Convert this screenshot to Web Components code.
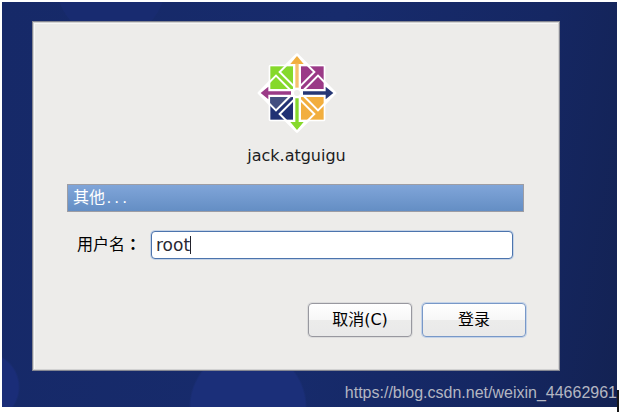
<!DOCTYPE html>
<html lang="zh-CN">
<head>
<meta charset="utf-8">
<title>登录</title>
<style>
html{height:100%;background:#fff}
body{margin:0;height:100%;font:16px/20px "DejaVu Sans","Noto Sans CJK SC",sans-serif;color:#1c1c22}
</style>
</head>
<body>
<login-screen></login-screen>
<script>
const define=(name,html)=>customElements.define(name,class extends HTMLElement{
  connectedCallback(){
    if(this.shadowRoot)return;
    const t=document.createElement('template');
    t.innerHTML=html;
    this.attachShadow({mode:'open'}).append(t.content.cloneNode(true));
  }
});

define('brand-logo',`
<style>:host{display:block;width:80px;height:80px}svg{display:block;width:100%;height:100%}</style>
<svg viewBox="-120 -120 240 240" aria-hidden="true">
 <g fill="#fff" stroke="#fff" stroke-width="10" stroke-linejoin="round">
  <path d="M-80-80H80V80H-80Z"/>
  <path d="M0-114 57-57H-57ZM0 114 57 57H-57ZM-112 0-57-57V57ZM112 0 57-57V57Z"/>
 </g>
 <path fill="#86d92b" d="M-80-80H-12V-12H-80Z"/>
 <path fill="#9b3a87" d="M12-80H80V-12H12Z"/>
 <path fill="#213174" d="M-80 12H-12V80H-80Z"/>
 <path fill="#444f80" d="M-80 12H-12L-63 52-80 35Z"/>
 <path fill="#f2ae3e" d="M12 12H80V80H12Z"/>
 <g fill="none" stroke="#fff" stroke-width="6">
  <path d="M0-115 52-63 0-11-52-63ZM0 115 52 63 0 11-52 63ZM-115 0-63-52-11 0-63 52ZM115 0 63-52 11 0 63 52Z"/>
 </g>
 <path fill="#f2ae3e" d="M0-111 20-87H-20Z"/>
 <path fill="#f6c16d" d="M-5-88H5V-16H-5Z"/>
 <path fill="#86d92b" d="M0 111 20 87H-20ZM-5 88H5V16H-5Z"/>
 <path fill="#9b3a87" d="M-109 0-86-19V19ZM-88-5H-18V5H-88Z"/>
 <path fill="#263775" d="M109 0 86-19V19ZM88-5H18V5H88Z"/>
 <circle r="15" fill="#fff"/><circle r="9" fill="#ededeb"/>
</svg>`);

define('user-row',`
<style>
:host{display:block}
button{display:block;box-sizing:border-box;width:100%;height:28px;padding:0 5px;border:1px solid #9d9da4;background:linear-gradient(#80a5d9,#648ec4);color:#fff;font:inherit;text-align:left}
</style><button type="button"><slot></slot></button>`);

define('name-field',`
<style>
:host{display:flex;align-items:center}
label{width:74px;color:#000;white-space:nowrap}
.box{flex:1;display:flex;align-items:center;box-sizing:border-box;height:28px;padding:0 4px;border:1px solid #4c74ad;border-radius:4px;background:#fff;box-shadow:0 0 0 1px #c6d3e5}
input{field-sizing:content;border:0;padding:0;margin:0;outline:0;background:none;font:inherit;font-size:17px;color:#292933}
i{width:1px;height:18px;background:#22222c}
</style>
<label for="user"><slot></slot></label>
<div class="box"><input id="user" type="text" value="root"><i></i></div>`);

define('dialog-button',`
<style>
:host{display:block;width:104px}
button{display:block;box-sizing:border-box;width:100%;height:34px;padding:0;border:1px solid #98989f;border-radius:4px;background:linear-gradient(#fff,#f7f7f7 50%,#ececeb 51%,#e9e9e9);box-shadow:0 0 0 1px #dcdcdc;color:#000;font:inherit}
:host([primary]) button{border-color:#7898c8;box-shadow:0 0 0 1px #c4d3e8}
</style><button type="button"><slot></slot></button>`);

define('login-dialog',`
<style>
:host{display:flex;flex-direction:column;box-sizing:border-box;padding:31px 33px 33px 34px;border:1px solid #858792;background:#edecea;box-shadow:inset 0 0 0 1px #d2d2d2,inset 2px 2px #f8f8f7}
brand-logo{align-self:center}
h1{margin:13px 0 18px;font:inherit;text-align:center}
user-row{margin-right:2px}
name-field{margin:19px 13px 0 10px}
.actions{display:flex;justify-content:flex-end;gap:10px;margin-top:44px}
.colon{font-family:"Noto Sans CJK TC",sans-serif;font-weight:700;line-height:16px}
.dots{font-family:"DejaVu Sans Mono",monospace;font-size:13px}
</style>
<brand-logo></brand-logo>
<h1>jack.atguigu</h1>
<user-row>其他<span class="dots">...</span></user-row>
<name-field>用户名<span class="colon" lang="zh-TW">：</span></name-field>
<div class="actions"><dialog-button>取消(C)</dialog-button><dialog-button primary>登录</dialog-button></div>`);

define('login-screen',`
<style>
:host{display:flex;align-items:stretch;box-sizing:border-box;min-height:100%;padding:2px 6px 0 2px}
main{flex:1;display:flex;flex-direction:column;justify-content:space-between;margin-bottom:5px;padding:19px 0 4px;
 background:radial-gradient(circle at -17px 385px,#1a2d78 33px,transparent 35px),
 radial-gradient(circle at 246px 405px,#1b2f79 57px,transparent 59px),
 radial-gradient(circle at 109px -18px,#182b70 54px,transparent 55px),
 linear-gradient(100deg,#162968,#172b6c 50%,#152763 80%,#132253)}
login-dialog{margin:0 57px 0 30px}
a{align-self:flex-end;color:#b3b6c2;font:16px/20px "Liberation Sans",sans-serif;text-decoration:none}
.edge{align-self:flex-end;width:2px;height:22px;background:#171717}
</style>
<main><login-dialog></login-dialog><a href="https://blog.csdn.net/weixin_44662961">https://blog.csdn.net/weixin_44662961</a></main>
<div class="edge"></div>`);
</script>
</body>
</html>
